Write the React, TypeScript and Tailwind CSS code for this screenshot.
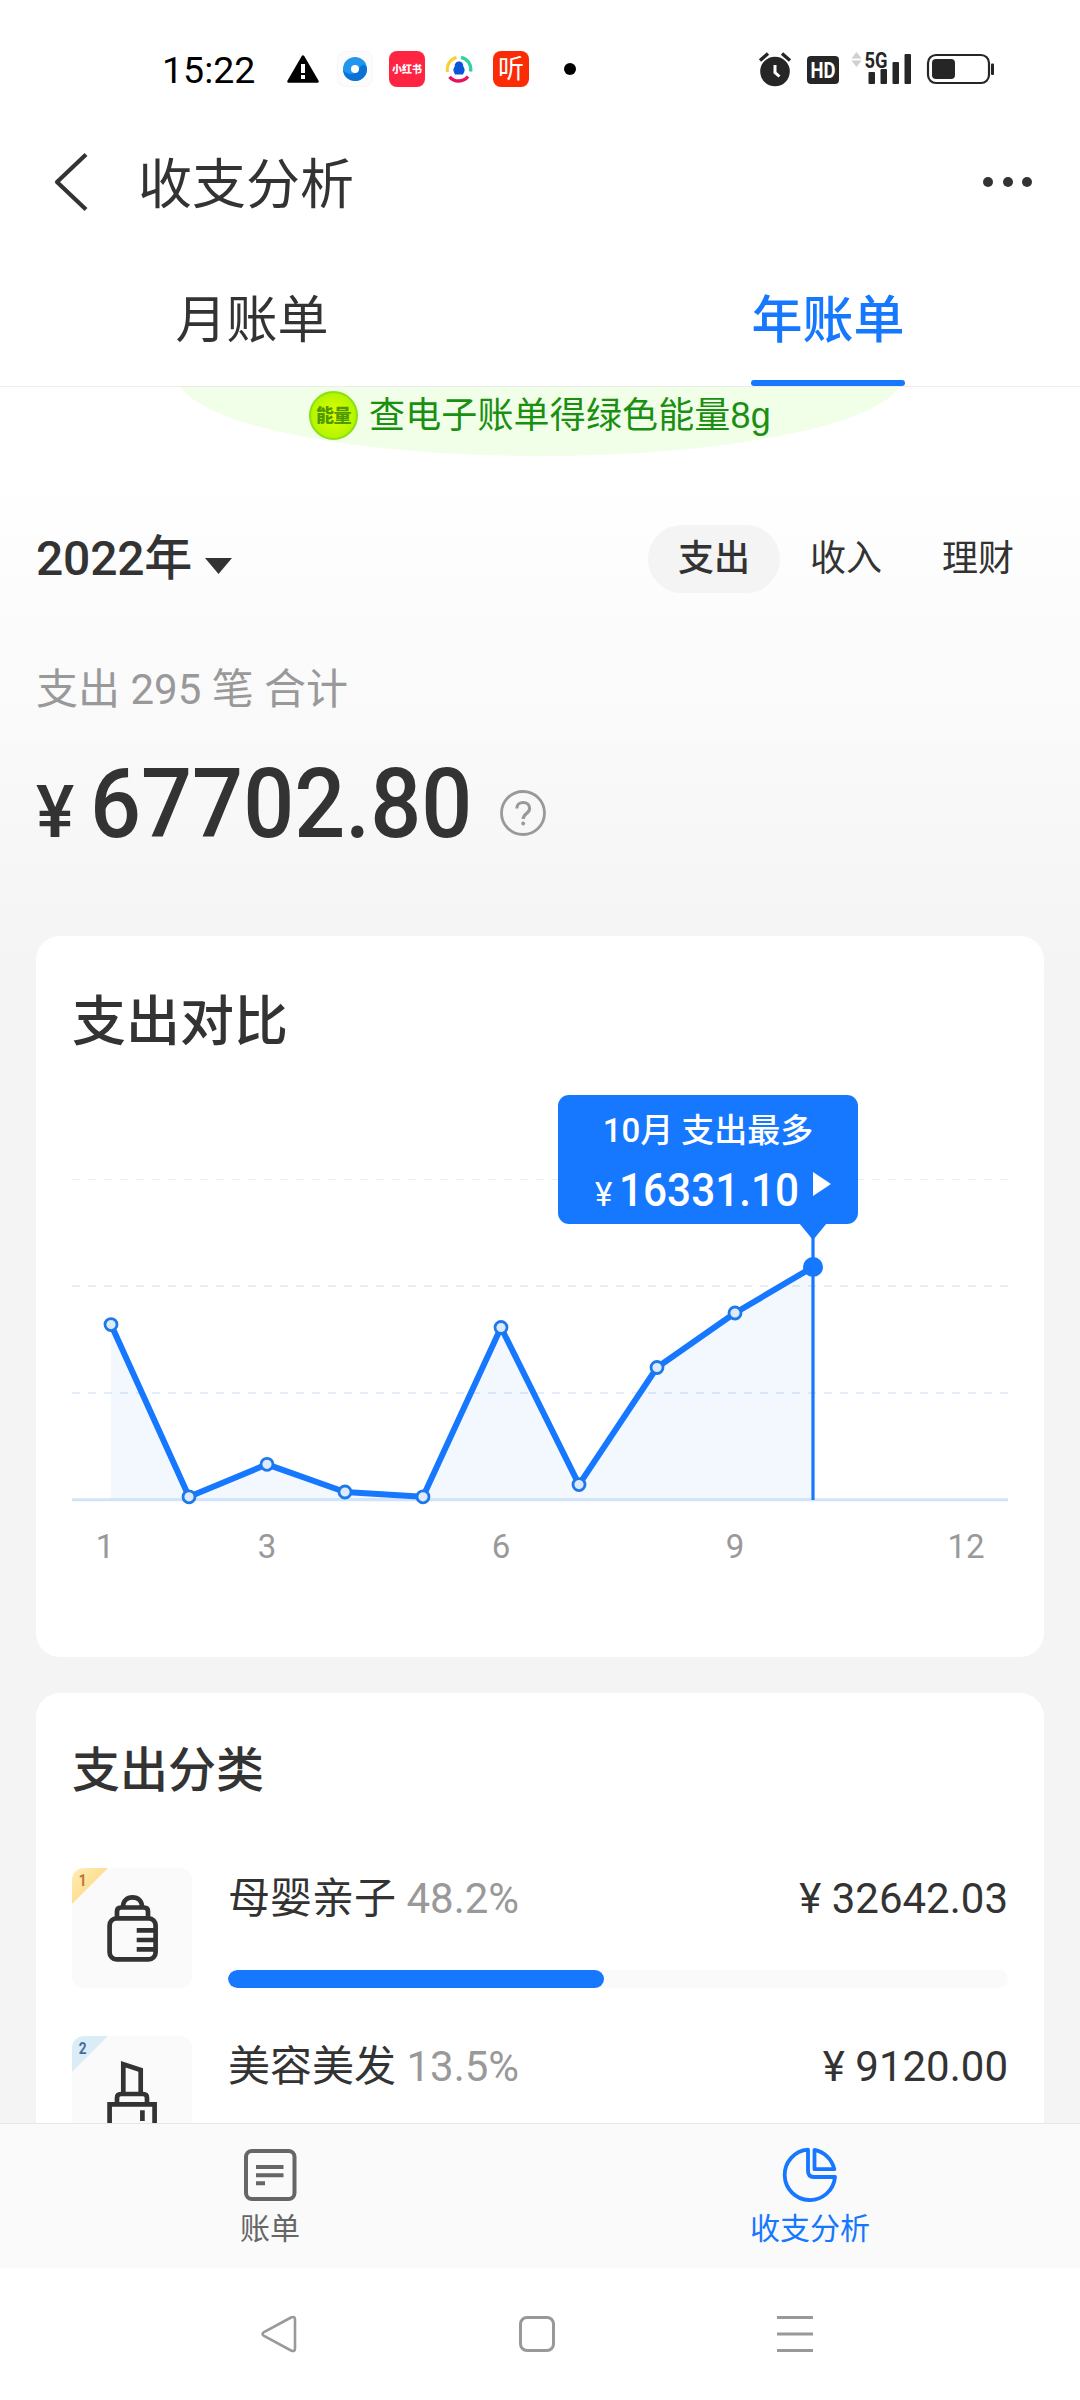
import React from "react";

const BLUE = "#1677ff";

const points = [
  [111, 1324.6],
  [189, 1496.8],
  [267, 1464.3],
  [345, 1492],
  [423, 1496.8],
  [501, 1327.5],
  [579, 1484.6],
  [657, 1367.5],
  [735, 1313],
  [813, 1267],
].map(([x, y]) => [x - 72, y - 1095]);

function StatusBar() {
  return (
    <div className="flex h-[138px] shrink-0 items-center pr-[86px] pl-[162px]">
      <span className="w-[94px] pt-[2px] text-[37.500px] leading-[40px] whitespace-nowrap text-black">15:22</span>
      <svg className="ml-[31px] h-[28px] w-[32px]" viewBox="0 0 32 28">
        <path d="M16 1.5 30.5 26.5H1.5Z" fill="#000" stroke="#000" strokeWidth="2.5" strokeLinejoin="round" />
        <path d="M14 9h4v9h-4zM14 20h4v4h-4z" fill="#fff" />
      </svg>
      <svg className="ml-[18px] h-[36px] w-[36px]" viewBox="0 0 36 36">
        <rect x="0.5" y="0.5" width="35" height="35" rx="8" fill="#fcfcfc" stroke="#f6f6f6" />
        <circle cx="18" cy="18" r="12" fill="#2196ee" />
        <path d="M6 19c5 6 13 5 16-1s6-5 8-1a12 12 0 0 1-24 2Z" fill="#0b72d4" />
        <circle cx="18" cy="18" r="4" fill="#fff" />
      </svg>
      <div className="ml-[16px] flex h-[36px] w-[36px] items-center justify-center rounded-[8px] bg-[#ff2442] text-[10px] font-black whitespace-nowrap text-white">
        小红书
      </div>
      <svg className="ml-[20px] h-[28px] w-[28px]" viewBox="0 0 28 28" fill="none">
        <path d="M2.6 17A12 12 0 0 1 11.500 2.500" stroke="#f9cf32" strokeWidth="3" />
        <path d="M16 2.300A12 12 0 0 1 25.500 16.500" stroke="#34d0a4" strokeWidth="3.400" />
        <path d="M4.500 21.800A12 12 0 0 0 23 21.500" stroke="#e8115e" strokeWidth="3.400" />
        <path d="M14 6.500c3 0 4.300 2.200 4.300 5 1.400 2 1.700 4.500.9 5.200-.8 1.800-1.200 2.300-1.200 2.800h-8c0-.5-.4-1-1.200-2.800-.8-.7-.5-3.200.9-5.200 0-2.800 1.300-5 4.300-5Z" fill="#0b55d9" />
      </svg>
      <div className="ml-[20px] flex h-[36px] w-[36px] items-center justify-center rounded-[8px] bg-[#fb2b05] text-[26px] leading-[36px] font-normal text-white">
        听
      </div>
      <div className="ml-[35px] h-[12px] w-[12px] rounded-full bg-black" />

      <svg className="ml-auto h-[56px] w-[236px]" viewBox="758 41 236 56">
        <g fill="#262626">
          <circle cx="775" cy="71.500" r="14.800" />
          <path d="M760 60.500 768 53.500M790 60.500 782 53.500" stroke="#262626" strokeWidth="3.400" />
          <path d="M775 65V72.500L779.500 76.500" fill="none" stroke="#fff" strokeWidth="3" />
          <rect x="807" y="56" width="32" height="28" rx="4" />
          <text x="823" y="77.500" textAnchor="middle" fontSize="21.500" fontWeight="700" fill="#fff" textLength="25" lengthAdjust="spacingAndGlyphs" fontFamily="Roboto">HD</text>
          <path d="M856.500 52 861.500 58.500H851.500ZM856.500 67 861.500 60.500H851.500Z" fill="#d0d0d0" />
          <rect x="868.500" y="72" width="6.500" height="12" rx="1" />
          <rect x="880.500" y="69" width="6.500" height="15" rx="1" />
          <rect x="892.500" y="62" width="6.500" height="22" rx="1" />
          <rect x="904.500" y="54" width="6.500" height="30" rx="1" />
          <text x="864.500" y="67.500" fontSize="21.500" fontWeight="700" textLength="23" lengthAdjust="spacingAndGlyphs" fontFamily="Roboto">5G</text>
          <rect x="928" y="55" width="61" height="28" rx="8" fill="#fff" stroke="#262626" strokeWidth="2.200" />
          <rect x="932" y="59" width="23" height="20" rx="4" />
          <rect x="991" y="63.500" width="3" height="11.500" rx="1" />
        </g>
      </svg>
    </div>
  );
}

function Header() {
  return (
    <div className="flex h-[100px] shrink-0 items-center pr-[48px] pl-[53px] text-[#333]">
      <svg className="-mt-[12px] h-[60px] w-[36px]" viewBox="0 0 36 60">
        <path d="M33 2.500 4 30 33 57.500" fill="none" stroke="#333" strokeWidth="4.200" strokeLinejoin="round" />
      </svg>
      <span className="-mt-[4px] ml-[49px] text-[54px] leading-[60px]">收支分析</span>
      <div className="-mt-[12px] ml-auto flex gap-[9.500px]">
        <i className="h-[10px] w-[10px] rounded-full bg-[#333]" />
        <i className="h-[10px] w-[10px] rounded-full bg-[#333]" />
        <i className="h-[10px] w-[10px] rounded-full bg-[#333]" />
      </div>
    </div>
  );
}

function Tabs() {
  return (
    <div className="flex h-[149px] shrink-0 justify-between border-b border-[#ececec] px-[175px] text-[51px]">
      <div className="flex h-[148px] w-[154px] flex-col items-center">
        <span className="pt-[48px] leading-[70px] whitespace-nowrap text-[#333]">月账单</span>
      </div>
      <div className="flex h-[148px] w-[154px] flex-col items-center justify-between">
        <span className="pt-[48px] leading-[70px] font-medium whitespace-nowrap text-[#1677ff]">年账单</span>
        <div className="h-[6px] w-full rounded-full bg-[#1677ff]" />
      </div>
    </div>
  );
}

function EnergyBanner() {
  return (
    <div className="relative flex h-[69px] items-start justify-center overflow-hidden">
      <div className="absolute bottom-0 left-[177px] h-[160px] w-[726px] rounded-[50%] bg-[#f2ffe8]" />
      <div className="relative mt-[4px] flex w-[462px] items-center">
        <div className="flex h-[49px] w-[49px] shrink-0 items-center justify-center rounded-full border-2 border-[#8be010] bg-radial from-[#e4ff00] to-[#9cf000] text-[18px] font-black tracking-[-0.500px] whitespace-nowrap text-[#4f9a00]">
          能量
        </div>
        <span className="ml-[11px] font-['Liberation_Sans','Noto_Sans_CJK_SC',sans-serif] text-[36px] leading-[49px] tracking-[0.150px] whitespace-nowrap text-[#1a8f12]">
          查电子账单得绿色能量8g
        </span>
      </div>
    </div>
  );
}

function Summary() {
  return (
    <div className="pl-[36px] text-[#333]">
      <div className="mt-[69px] flex h-[68px] items-center pr-[36px]">
        <span className="text-[48px] leading-[68px] font-medium tracking-[-0.200px]">2022年</span>
        <svg className="mt-[14px] ml-[13px] h-[16px] w-[27px]" viewBox="0 0 27 16">
          <path d="M0 0H27L13.500 16Z" fill="#333" />
        </svg>
        <div className="ml-auto flex text-[36px] leading-[69px]">
          <span className="h-[68px] w-[132px] rounded-full bg-[#f4f4f4] text-center font-medium">支出</span>
          <span className="w-[132px] text-center">收入</span>
          <span className="w-[132px] text-center">理财</span>
        </div>
      </div>
      <div className="mt-[67px] text-[42px] leading-[60px] text-[#999]">支出 295 笔 合计</div>
      <div className="mt-[24px] flex h-[120px] items-baseline">
        <span className="inline-block w-[54px] text-[72px] leading-[120px] font-medium">¥</span>
        <span className="inline-block w-[379px] origin-left scale-x-[0.926] text-[97px] leading-[120px] font-medium whitespace-nowrap">
          67702.80
        </span>
        <svg className="relative top-[0px] ml-[30px] h-[48px] w-[48px]" viewBox="0 0 48 48" fill="none" stroke="#999" strokeWidth="2.800">
          <circle cx="24" cy="24" r="21.500" />
          <path d="M17.800 19.500c0-8 12.800-8 12.800 0 0 5-6.400 5-6.400 10.500" strokeWidth="3.200" />
          <circle cx="24.200" cy="34.500" r="1.900" fill="#999" stroke="none" />
        </svg>
      </div>
    </div>
  );
}

function TrendChart() {
  const line = points.map((p) => p.join(",")).join(" ");
  return (
    <div className="relative h-[480px] w-[936px]">
      <svg className="h-[480px] w-[936px]" viewBox="0 0 936 480">
        <g strokeDasharray="8 8">
          <path d="M0 84.500H936" stroke="#e9efef" strokeWidth="1" />
          <path d="M0 191H936" stroke="#e6eff8" strokeWidth="2" />
          <path d="M0 298H936" stroke="#e4eefb" strokeWidth="2" />
        </g>
        <path d="M0 404.700H936" stroke="#d1e4f9" strokeWidth="3" />
        <polygon points={`39,404 ${line} 741,404`} fill="#1677ff" fillOpacity="0.052" />
        <path d="M741 140V405" stroke={BLUE} strokeWidth="3.200" />
        <polyline points={line} fill="none" stroke={BLUE} strokeWidth="6" strokeLinejoin="round" />
        {points.slice(0, 9).map(([x, y]) => (
          <circle key={x} cx={x} cy={y} r="6" fill="#dbeafd" stroke="#1f78e8" strokeWidth="2.800" />
        ))}
        <circle cx="741" cy="172" r="10" fill={BLUE} />
        <path d="M727 128H755L741 145Z" fill={BLUE} />
        <g fill="#999" fontSize="33" textAnchor="middle" fontFamily="Roboto">
          <text x="33" y="463">1</text>
          <text x="195" y="463">3</text>
          <text x="429" y="463">6</text>
          <text x="663" y="463">9</text>
          <text x="894" y="463">12</text>
        </g>
      </svg>
      <div className="absolute top-0 left-[486px] h-[129px] w-[300px] rounded-[11px] bg-[#1677ff] text-white">
        <div className="pt-[12px] text-center text-[33px] leading-[48px] font-medium">10月 支出最多</div>
        <div className="flex items-baseline pt-[3px] pl-[37px] leading-[64px]">
          <span className="w-[24px] text-[33px]">¥</span>
          <span className="w-[182px] origin-left scale-x-[0.92] text-[46px] font-medium whitespace-nowrap">16331.10</span>
          <svg className="relative top-[-10px] ml-[12px] h-[24px] w-[18px]" viewBox="0 0 18 24">
            <path d="M0 0 18 12 0 24Z" fill="#fff" />
          </svg>
        </div>
      </div>
    </div>
  );
}

function BottleIcon() {
  return (
    <svg className="h-[120px] w-[120px]" viewBox="0 0 120 120" fill="none" stroke="#333" strokeWidth="4.700">
      <rect x="37.600" y="50.400" width="46" height="41" rx="7" />
      <path d="M45 50V43.500q0-4 4-4H72q4 0 4 4V50" />
      <path d="M51 39C51 33 55 29.300 60.500 29.300S70 33 70 39" />
      <path d="M64.700 62.300H84M64.700 72H84M64.700 81.300H84" />
    </svg>
  );
}

function LipstickIcon() {
  return (
    <svg className="h-[120px] w-[120px]" viewBox="0 0 120 120" fill="none" stroke="#333" strokeWidth="4.700">
      <path d="M51.300 58V28.200L68.700 34V58" />
      <path d="M45 68V62q0-4 4-4H71q4 0 4 4V68" />
      <path d="M37.600 100V68.400H82.600V100" />
      <path d="M70.400 74.300V85" />
    </svg>
  );
}

function CategoryRow(props: {
  rank: string;
  name: string;
  percent: string;
  amount: string;
  width: number;
  icon: React.ReactNode;
  ribbon: string;
  rankColor: string;
}) {
  return (
    <div className="mb-[48px] flex h-[120px]">
      <div className="relative h-[120px] w-[120px] shrink-0 overflow-hidden rounded-[12px] bg-[#fafafa]">
        {props.icon}
        <div className={"absolute top-0 left-0 h-[36px] w-[36px] [clip-path:polygon(0_0,100%_0,0_100%)] " + props.ribbon} />
        <span className={"absolute top-[2px] left-[6px] w-[8px] scale-x-[0.8] text-[17px] leading-[20px] font-bold " + props.rankColor}>
          {props.rank}
        </span>
      </div>
      <div className="ml-[36px] flex flex-1 flex-col justify-between text-[42px] leading-[61px] text-[#333]">
        <div className="flex justify-between whitespace-nowrap">
          <span>
            {props.name} <span className="text-[#999]">{props.percent}</span>
          </span>
          <span>¥ {props.amount}</span>
        </div>
        <div className="h-[18px] overflow-hidden rounded-full bg-[#fafafa]">
          <div className="h-full rounded-full bg-[#1677ff]" style={{ width: `${props.width}%` }} />
        </div>
      </div>
    </div>
  );
}

function BottomNav() {
  return (
    <div className="flex h-[145px] shrink-0 border-t-[1px] border-[#e6e6e6] bg-[#fafafa] text-[30px] leading-[40px]">
      <div className="flex flex-1 flex-col items-center pt-[22px] text-[#666]">
        <svg className="h-[58px] w-[58px]" viewBox="0 0 58 58" fill="none" stroke="#666" strokeWidth="4">
          <rect x="5" y="5" width="48.500" height="48" rx="6" />
          <path d="M15 21H42.500M15 29.200H42.500M15 37.300H24" />
        </svg>
        <span className="mt-[5px]">账单</span>
      </div>
      <div className="flex flex-1 flex-col items-center pt-[22px] text-[#1677ff]">
        <svg className="h-[58px] w-[58px]" viewBox="0 0 58 58" fill="none" stroke={BLUE} strokeWidth="3.800" strokeLinejoin="round">
          <path d="M27 3.700A25.200 25.200 0 1 0 54 31H33Q27 31 27 25Z" />
          <path d="M33.500 3.900V23.200H53.300A25.500 25.500 0 0 0 33.500 3.900Z" />
        </svg>
        <span className="mt-[5px]">收支分析</span>
      </div>
    </div>
  );
}

function SystemNav() {
  return (
    <div className="flex h-[132px] shrink-0 items-center pb-[1px] pl-[260px]">
      <svg className="h-[40px] w-[38px]" viewBox="0 0 38 40" fill="none" stroke="#999" strokeWidth="2.600">
        <path d="M31 3.500 4 18Q1 20 4 22L31 36.500Q35 38 35 34.500V5.500Q35 2 31 3.500Z" />
      </svg>
      <div className="ml-[221px] h-[36px] w-[36px] rounded-[8px] border-[3px] border-[#999]" />
      <svg className="ml-[222px] h-[36px] w-[36px]" viewBox="0 0 36 36" stroke="#999" strokeWidth="2.800">
        <path d="M0 1.500H36M0 18H36M0 34.500H36" />
      </svg>
    </div>
  );
}

export default function App() {
  return (
    <div className="flex h-[2400px] w-[1080px] flex-col overflow-hidden bg-white font-['Roboto','Noto_Sans_CJK_SC',sans-serif]">
      <StatusBar />
      <Header />
      <Tabs />
      <div className="h-[1736px] shrink-0 overflow-hidden bg-[#f4f4f4] bg-[linear-gradient(to_bottom,#ffffff_0px,#ffffff_80px,#f4f4f4_600px)]">
        <EnergyBanner />
        <Summary />
        <div className="mx-[36px] mt-[72px] h-[721px] rounded-[24px] bg-white px-[36px] pt-[52px]">
          <h2 className="mb-[37px] text-[54px] leading-[70px] font-medium text-[#333]">支出对比</h2>
          <TrendChart />
        </div>
        <div className="mx-[36px] mt-[36px] h-[600px] rounded-[24px] bg-white px-[36px] pt-[43px]">
          <h2 className="mb-[62px] text-[48px] leading-[70px] font-medium text-[#333]">支出分类</h2>
          <CategoryRow
            rank="1"
            name="母婴亲子"
            percent="48.2%"
            amount="32642.03"
            width={48.2}
            icon={<BottleIcon />}
            ribbon="bg-linear-to-br from-[#fdeeb8] to-[#ffd06a]"
            rankColor="text-[#c0703a]"
          />
          <CategoryRow
            rank="2"
            name="美容美发"
            percent="13.5%"
            amount="9120.00"
            width={13.5}
            icon={<LipstickIcon />}
            ribbon="bg-linear-to-br from-[#d8eef9] to-[#deebf4]"
            rankColor="text-[#4a6c9c]"
          />
        </div>
      </div>
      <BottomNav />
      <SystemNav />
    </div>
  );
}
